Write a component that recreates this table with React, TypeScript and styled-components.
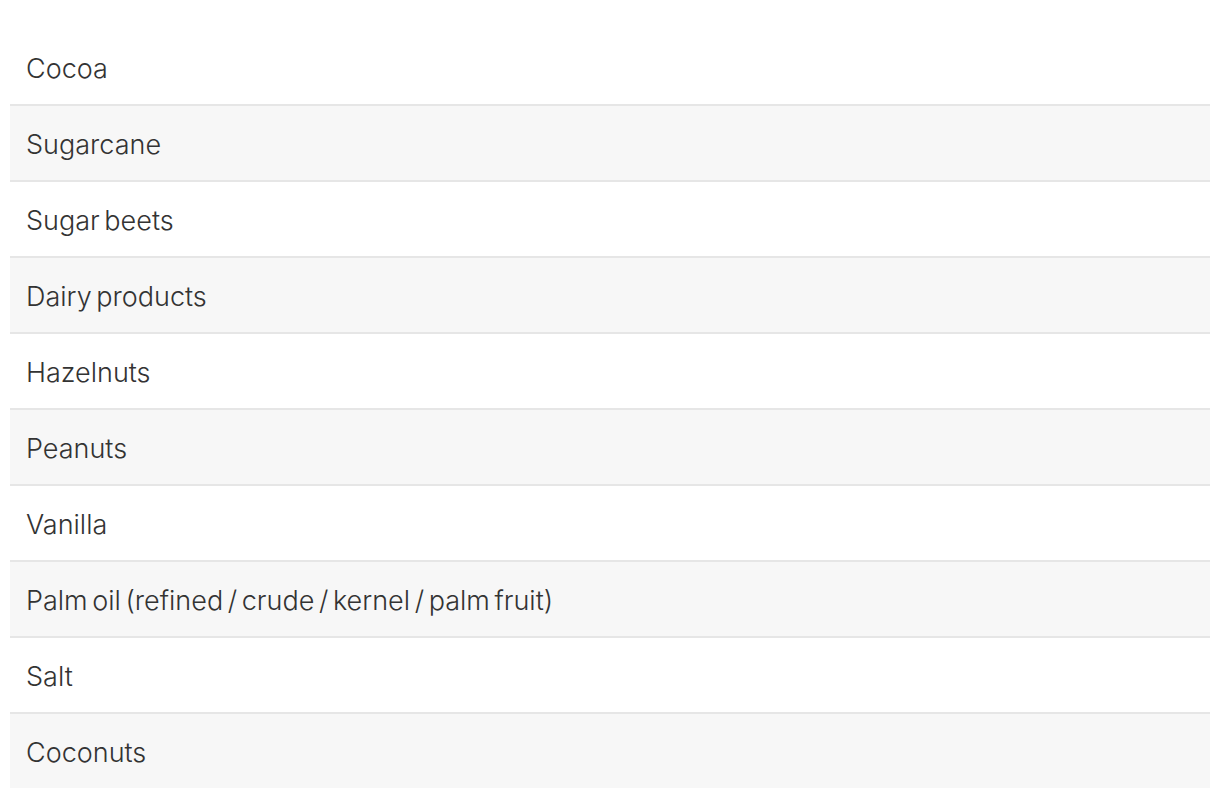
import React from "react";
import styled, { createGlobalStyle } from "styled-components";

const Global = createGlobalStyle`
  html, body { margin: 0; padding: 0; background: #ffffff; }
  body { font-family: Inter, "Helvetica Neue", Arial, sans-serif; }
`;

const Page = styled.div`
  padding: 30px 10px 10px 10px;
`;

const List = styled.ul`
  list-style: none;
  margin: 0;
  padding: 0;
  display: flex;
  flex-direction: column;
`;

const Row = styled.li<{ $alt: boolean }>`
  box-sizing: border-box;
  height: 76px;
  display: flex;
  align-items: center;
  padding: 2px 16px 0 16px;
  background: ${(p) => (p.$alt ? "#f7f7f7" : "#ffffff")};
  border-top: 2px solid #e6e6e6;
  font-size: 27px;
  font-weight: 300;
  word-spacing: -3px;
  color: #333333;
  &:first-child { border-top: none; height: 74px; }
`;

const items = [
  "Cocoa",
  "Sugarcane",
  "Sugar beets",
  "Dairy products",
  "Hazelnuts",
  "Peanuts",
  "Vanilla",
  "Palm oil (refined / crude / kernel / palm fruit)",
  "Salt",
  "Coconuts",
];

export default function App() {
  return (
    <>
      <Global />
      <Page>
        <List>
          {items.map((t, i) => (
            <Row key={t} $alt={i % 2 === 1}>
              {t}
            </Row>
          ))}
        </List>
      </Page>
    </>
  );
}
